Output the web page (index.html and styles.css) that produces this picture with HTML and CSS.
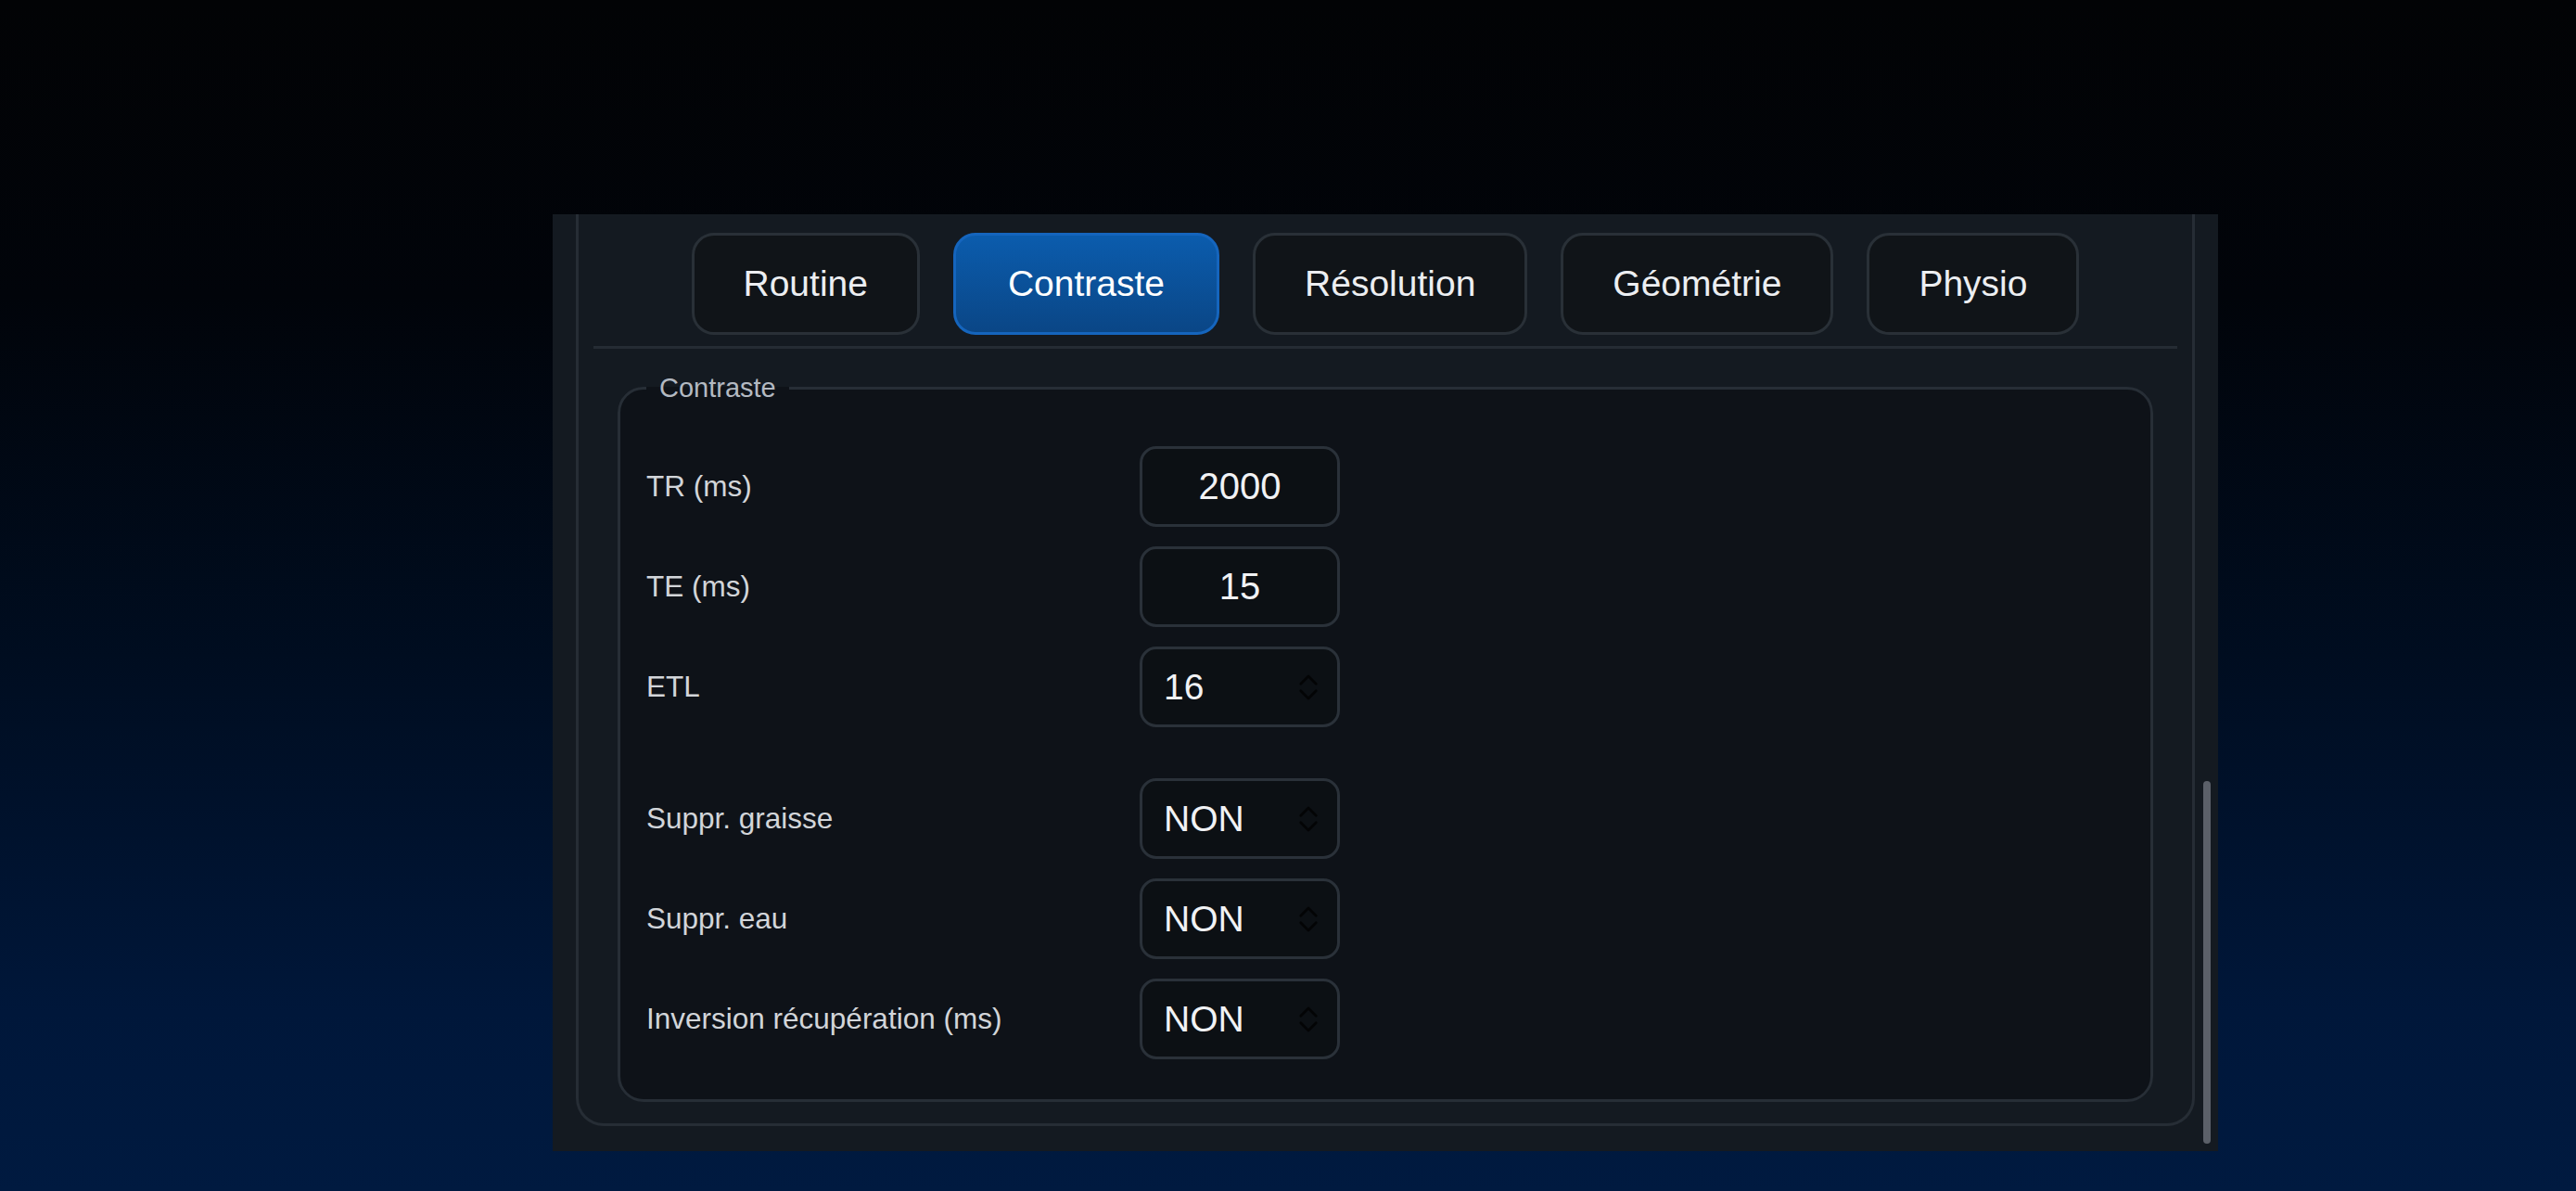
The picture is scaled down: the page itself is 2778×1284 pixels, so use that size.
FILE: index.html
```html
<!DOCTYPE html>
<html>
<head>
  <link rel="stylesheet" href="styles.css">
</head>
<body>
  <div class="screen">
    <div class="panel">
      <div class="group">
        <nav class="tabs">
          <button class="tab">Routine</button>
          <button class="tab active">Contraste</button>
          <button class="tab">Résolution</button>
          <button class="tab">Géométrie</button>
          <button class="tab">Physio</button>
        </nav>
        <hr class="divider">

        <fieldset class="params">
          <legend>Contraste</legend>

          <div class="rows">
            <label for="tr">TR (ms)</label>
            <input class="field num" id="tr" type="text" value="2000">

            <label for="te">TE (ms)</label>
            <input class="field num" id="te" type="text" value="15">

            <label>ETL</label>
            <div class="field select">
              <span>16</span>
              <svg class="chevrons" viewBox="0 0 24 32"><path d="M3 12 L12 3 L21 12 M3 20 L12 29 L21 20"/></svg>
            </div>
          </div>

          <div class="rows">
            <label>Suppr. graisse</label>
            <div class="field select">
              <span>NON</span>
              <svg class="chevrons" viewBox="0 0 24 32"><path d="M3 12 L12 3 L21 12 M3 20 L12 29 L21 20"/></svg>
            </div>

            <label>Suppr. eau</label>
            <div class="field select">
              <span>NON</span>
              <svg class="chevrons" viewBox="0 0 24 32"><path d="M3 12 L12 3 L21 12 M3 20 L12 29 L21 20"/></svg>
            </div>

            <label>Inversion récupération (ms)</label>
            <div class="field select">
              <span>NON</span>
              <svg class="chevrons" viewBox="0 0 24 32"><path d="M3 12 L12 3 L21 12 M3 20 L12 29 L21 20"/></svg>
            </div>
          </div>
        </fieldset>
      </div>
      <div class="scroll-thumb"></div>
    </div>
  </div>
</body>
</html>
```

FILE: styles.css
```css
body {
  margin: 0;
  font-family: "Liberation Sans", Arial, sans-serif;
  background: linear-gradient(to bottom, #020305 0%, #01040a 25%, #000d20 55%, #00173a 85%, #001a40 100%);
}

.screen {
  height: 1284px;
  box-sizing: border-box;
  padding: 231px 0 0 596px;
}

.panel {
  position: relative;
  width: 1796px;
  height: 1010px;
  box-sizing: border-box;
  padding: 0 25px 27px;
  background: #141a21;
  display: flex;
  flex-direction: column;
}

.group {
  flex: 1;
  border: 3px solid #262d35;
  border-top: none;
  border-radius: 0 0 30px 30px;
  padding: 20px 16px 0;
  display: flex;
  flex-direction: column;
}

.tabs {
  display: flex;
  justify-content: center;
  gap: 36px;
}

.tab {
  height: 110px;
  padding: 0 53px;
  border: 3px solid #293037;
  border-radius: 24px;
  background: #101418;
  color: #eceef1;
  font-family: "Liberation Sans", Arial, sans-serif;
  font-size: 39px;
}

.tab.active {
  padding: 0 56px;
  border-color: #1565bd;
  background: linear-gradient(to bottom, #0b5cad, #0a4686);
  color: #ffffff;
}

.divider {
  border: none;
  height: 3px;
  margin: 12px 0 0;
  background: #252c34;
}

.params {
  margin: 26px 26px 0;
  padding: 0 0 43px 28px;
  border: 3px solid #272e36;
  border-radius: 28px;
  background: #0e1218;
}

.params legend {
  padding: 0 14px;
  color: #b3b9c1;
  font-size: 29px;
}

.rows {
  display: grid;
  grid-template-columns: 532px 216px;
  row-gap: 21px;
  align-items: center;
  margin-top: 46px;
}

.rows + .rows {
  margin-top: 55px;
}

.rows label {
  color: #d2d5d9;
  font-size: 31.5px;
}

.field {
  width: 216px;
  height: 87px;
  box-sizing: border-box;
  border: 3px solid #2a3139;
  border-radius: 18px;
  background: #0c1014;
  color: #f1f2f4;
  font-family: "Liberation Sans", Arial, sans-serif;
  font-size: 40px;
}

.num {
  text-align: center;
  padding: 0;
  outline: none;
}

.select {
  display: flex;
  align-items: center;
  justify-content: space-between;
  padding: 0 20px 0 23px;
  font-size: 39px;
}

.chevrons {
  width: 22px;
  height: 30px;
  fill: none;
  stroke: #030405;
  stroke-width: 3;
  stroke-linecap: round;
  stroke-linejoin: round;
}

.scroll-thumb {
  position: absolute;
  right: 8px;
  bottom: 8px;
  width: 8px;
  height: 391px;
  border-radius: 4px;
  background: #5b6069;
}
```
